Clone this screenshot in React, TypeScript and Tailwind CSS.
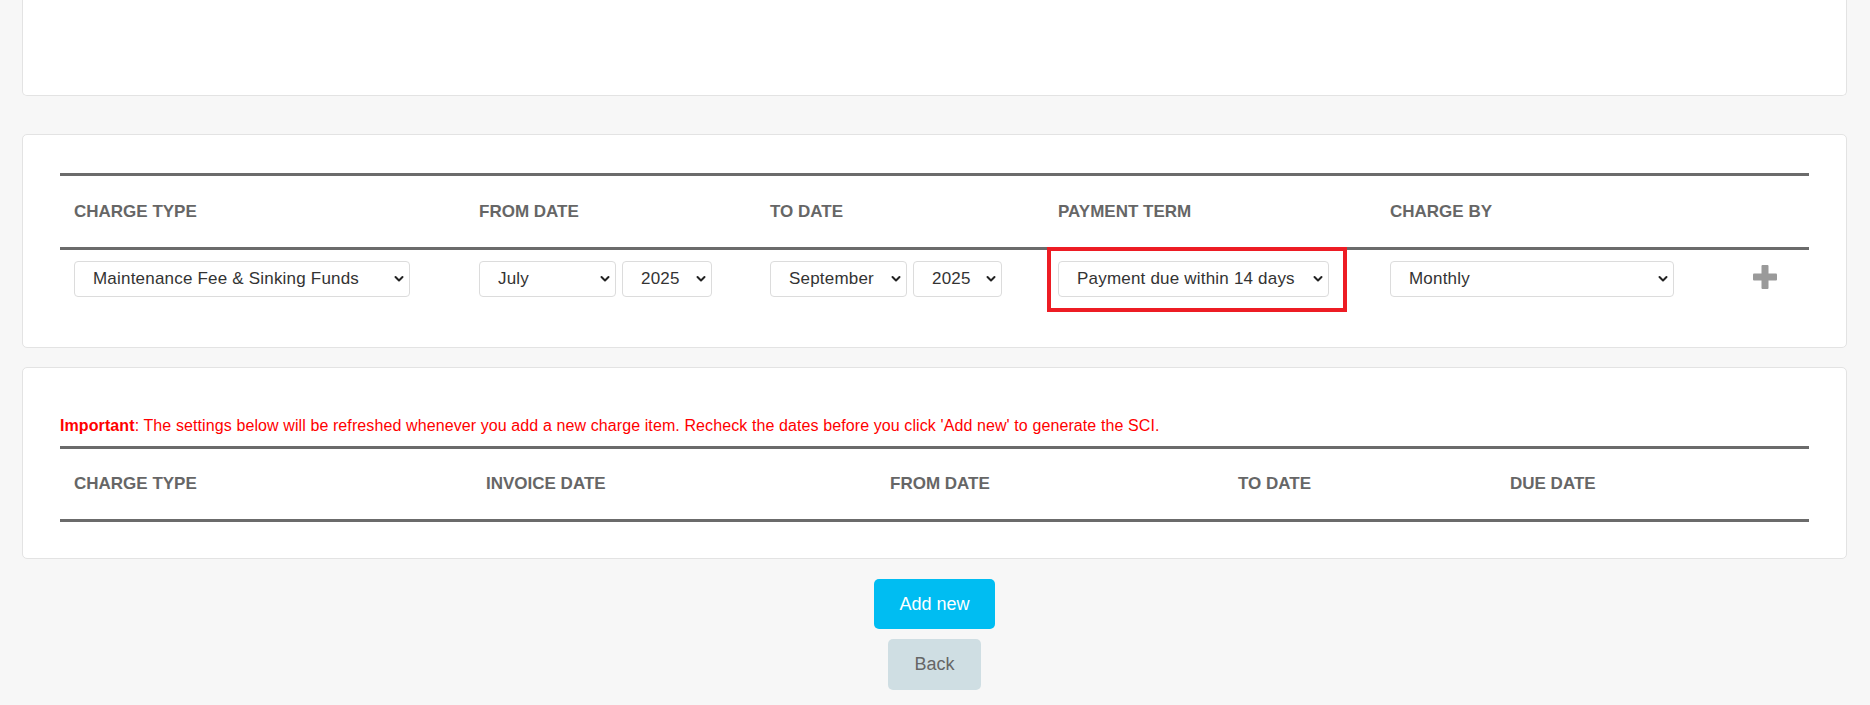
import React from 'react';

const chargeCols = 'grid grid-cols-[405px_291px_288px_332px_346px_86px]';
const listCols = 'grid grid-cols-[412px_404px_348px_272px_312px]';

const months = ['January', 'February', 'March', 'April', 'May', 'June', 'July', 'August', 'September', 'October', 'November', 'December'];
const years = ['2024', '2025', '2026'];

function Chevron() {
  return (
    <svg
      className="pointer-events-none absolute right-[6px] top-1/2 -translate-y-1/2"
      width="10"
      height="7"
      viewBox="0 0 10 7"
      fill="none"
    >
      <path d="M1.5 1.5 5 5l3.5-3.5" stroke="#222" strokeWidth="2" strokeLinecap="round" strokeLinejoin="round" />
    </svg>
  );
}

function Select({ value, options, className }: { value: string; options: string[]; className: string }) {
  return (
    <div className={`relative ${className}`}>
      <select
        defaultValue={value}
        className="h-[36px] w-full appearance-none rounded-[4px] border border-[#dcdcdc] bg-white pl-[18px] pr-6 text-[17px] tracking-[0.2px] text-[#333] outline-none"
      >
        {options.map((o) => (
          <option key={o}>{o}</option>
        ))}
      </select>
      <Chevron />
    </div>
  );
}

function HeadCell({ children }: { children: React.ReactNode }) {
  return <div className="px-[14px] text-[17px] font-bold uppercase text-[#666]">{children}</div>;
}

export default function App() {
  return (
    <div className="min-h-screen bg-[#f7f7f7] pl-[22px] pr-[23px] font-['Liberation_Sans',Arial,sans-serif]">
      {/* top card, scrolled mostly out of view */}
      <div className="h-[96px] rounded-b-[5px] border-x border-b border-[#e3e3e3] bg-white"></div>

      {/* charge item form */}
      <div className="mt-[38px] rounded-[5px] border border-[#e3e3e3] bg-white px-[37px] pt-[38px] pb-[38px]">
        <div className={`${chargeCols} h-[77px] items-center border-y-[3px] border-[#6b6b6b]`}>
          <HeadCell>Charge Type</HeadCell>
          <HeadCell>From Date</HeadCell>
          <HeadCell>To Date</HeadCell>
          <HeadCell>Payment Term</HeadCell>
          <HeadCell>Charge By</HeadCell>
          <div></div>
        </div>
        <div className={`${chargeCols} pt-[11px] pb-[12px]`}>
          <div className="px-[14px]">
            <Select value="Maintenance Fee & Sinking Funds" options={['Maintenance Fee & Sinking Funds', 'Utilities', 'Insurance']} className="w-[336px]" />
          </div>
          <div className="flex gap-[6px] px-[14px]">
            <Select value="July" options={months} className="w-[137px]" />
            <Select value="2025" options={years} className="w-[90px]" />
          </div>
          <div className="flex gap-[6px] px-[14px]">
            <Select value="September" options={months} className="w-[137px]" />
            <Select value="2025" options={years} className="w-[89px]" />
          </div>
          <div className="px-[14px]">
            <div className="relative w-[271px]">
              <Select value="Payment due within 14 days" options={['Payment due within 7 days', 'Payment due within 14 days', 'Payment due within 30 days']} className="w-[271px]" />
              <div className="pointer-events-none absolute -left-[11px] -right-[18px] -top-[14px] -bottom-[15px] border-[4px] border-[#ed1c24]"></div>
            </div>
          </div>
          <div className="px-[14px]">
            <Select value="Monthly" options={['Monthly', 'Quarterly', 'Yearly']} className="w-[284px]" />
          </div>
          <div className="flex h-[36px] items-center justify-center">
            <svg width="24" height="24" viewBox="0 0 24 24" className="-mt-[4px]">
              <rect x="8.5" y="0" width="7" height="24" rx="1" fill="#9a9a9a" />
              <rect x="0" y="8.5" width="24" height="7" rx="1" fill="#9a9a9a" />
            </svg>
          </div>
        </div>
      </div>

      {/* generated items */}
      <div className="mt-[19px] rounded-[5px] border border-[#e3e3e3] bg-white px-[37px] pt-[38px] pb-[36px]">
        <p className="pt-[10px] pb-[10px] text-[16px] leading-[20px] tracking-[0.1px] text-[#ff0000]">
          <span className="font-bold">Important</span>: The settings below will be refreshed whenever you add a new charge item. Recheck the dates before you click 'Add new' to generate the SCI.
        </p>
        <div className={`${listCols} h-[76px] items-center border-y-[3px] border-[#6b6b6b]`}>
          <HeadCell>Charge Type</HeadCell>
          <HeadCell>Invoice Date</HeadCell>
          <HeadCell>From Date</HeadCell>
          <HeadCell>To Date</HeadCell>
          <HeadCell>Due Date</HeadCell>
        </div>
      </div>

      <div className="flex flex-col items-center pt-[20px]">
        <button className="h-[50px] rounded-[5px] bg-[#00bdf2] px-[25px] text-[18px] text-white">Add new</button>
        <button className="mt-[10px] h-[51px] rounded-[5px] bg-[#cfdee3] px-[26px] text-[18px] text-[#666]">Back</button>
      </div>
    </div>
  );
}
